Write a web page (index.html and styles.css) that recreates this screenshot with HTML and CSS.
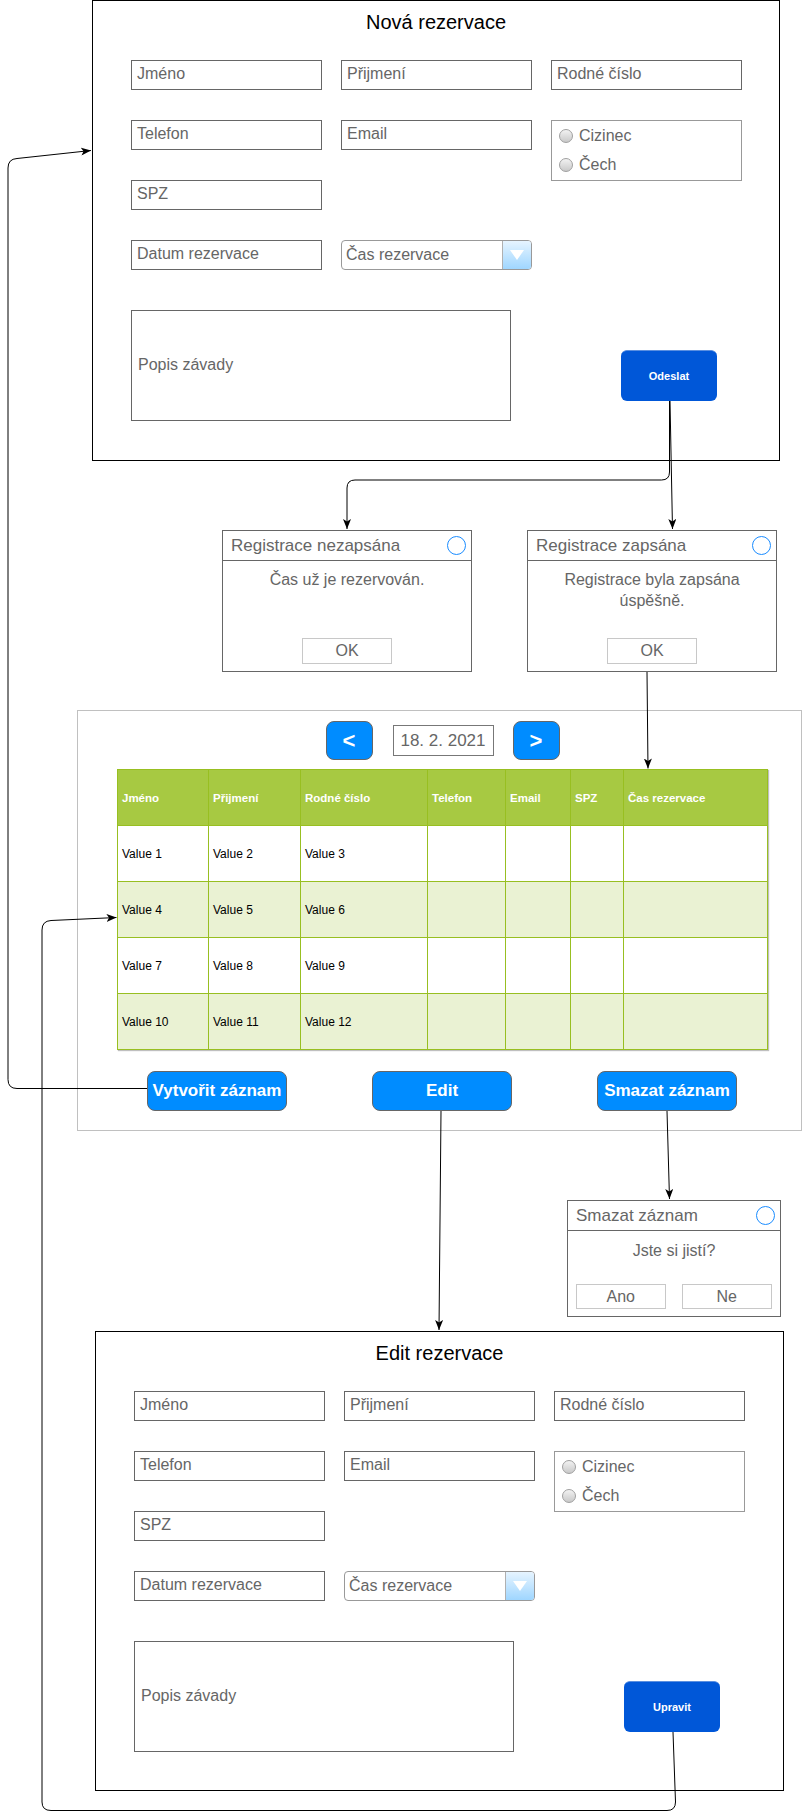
FILE: index.html
```html
<!DOCTYPE html>
<html lang="cs">
<head>
<meta charset="utf-8">
<title>Rezervace</title>
<link rel="stylesheet" href="styles.css">
</head>
<body>
<div class="canvas">

  <section class="frame frame-new">
    <h1 class="frame-title">Nová rezervace</h1>
    <div class="form-grid">
      <div class="field">Jméno</div>
      <div class="field">Přijmení</div>
      <div class="field">Rodné číslo</div>
      <div class="field">Telefon</div>
      <div class="field">Email</div>
      <div class="radios">
        <div class="radio"><span class="radio-dot"></span>Cizinec</div>
        <div class="radio"><span class="radio-dot"></span>Čech</div>
      </div>
      <div class="field">SPZ</div>
      <div class="field field-date">Datum rezervace</div>
      <div class="select"><span class="select-text">Čas rezervace</span><span class="select-btn"><span class="tri"></span></span></div>
    </div>
    <div class="form-bottom">
      <div class="textarea">Popis závady</div>
      <div class="btn-submit">Odeslat</div>
    </div>
  </section>

  <div class="dialog dlg-fail">
    <div class="dlg-head"><span class="dlg-title">Registrace nezapsána</span><span class="dlg-close"></span></div>
    <div class="dlg-body">Čas už je rezervován.</div>
    <div class="dlg-actions"><span class="dlg-btn">OK</span></div>
  </div>

  <div class="dialog dlg-ok">
    <div class="dlg-head"><span class="dlg-title">Registrace zapsána</span><span class="dlg-close"></span></div>
    <div class="dlg-body">Registrace byla zapsána<br>úspěšně.</div>
    <div class="dlg-actions"><span class="dlg-btn">OK</span></div>
  </div>

  <section class="panel">
    <div class="nav">
      <span class="nav-btn">&lt;</span>
      <span class="nav-date">18. 2. 2021</span>
      <span class="nav-btn">&gt;</span>
    </div>
    <table class="grid">
      <colgroup>
        <col class="c1"><col class="c2"><col class="c3"><col class="c4"><col class="c5"><col class="c6"><col class="c7">
      </colgroup>
      <thead>
        <tr><th>Jméno</th><th>Přijmení</th><th>Rodné číslo</th><th>Telefon</th><th>Email</th><th>SPZ</th><th>Čas rezervace</th></tr>
      </thead>
      <tbody>
        <tr><td>Value 1</td><td>Value 2</td><td>Value 3</td><td></td><td></td><td></td><td></td></tr>
        <tr class="alt"><td>Value 4</td><td>Value 5</td><td>Value 6</td><td></td><td></td><td></td><td></td></tr>
        <tr><td>Value 7</td><td>Value 8</td><td>Value 9</td><td></td><td></td><td></td><td></td></tr>
        <tr class="alt"><td>Value 10</td><td>Value 11</td><td>Value 12</td><td></td><td></td><td></td><td></td></tr>
      </tbody>
    </table>
    <div class="actions">
      <span class="act-btn">Vytvořit záznam</span>
      <span class="act-btn">Edit</span>
      <span class="act-btn">Smazat záznam</span>
    </div>
  </section>

  <div class="dialog dlg-del">
    <div class="dlg-head"><span class="dlg-title">Smazat záznam</span><span class="dlg-close"></span></div>
    <div class="dlg-body">Jste si jistí?</div>
    <div class="dlg-actions dlg-actions-two"><span class="dlg-btn">Ano</span><span class="dlg-btn">Ne</span></div>
  </div>

  <section class="frame frame-edit">
    <h1 class="frame-title">Edit rezervace</h1>
    <div class="form-grid">
      <div class="field">Jméno</div>
      <div class="field">Přijmení</div>
      <div class="field">Rodné číslo</div>
      <div class="field">Telefon</div>
      <div class="field">Email</div>
      <div class="radios">
        <div class="radio"><span class="radio-dot"></span>Cizinec</div>
        <div class="radio"><span class="radio-dot"></span>Čech</div>
      </div>
      <div class="field">SPZ</div>
      <div class="field field-date">Datum rezervace</div>
      <div class="select"><span class="select-text">Čas rezervace</span><span class="select-btn"><span class="tri"></span></span></div>
    </div>
    <div class="form-bottom">
      <div class="textarea">Popis závady</div>
      <div class="btn-submit">Upravit</div>
    </div>
  </section>

  <svg class="wires" width="802" height="1819" viewBox="0 0 802 1819">
    <defs>
      <marker id="arr" viewBox="0 0 10 8" refX="10" refY="4" markerWidth="10" markerHeight="8" orient="auto" markerUnits="userSpaceOnUse">
        <path d="M0,0 L10,4 L0,8 L2.5,4 z" fill="#000"/>
      </marker>
    </defs>
    <g fill="none" stroke="#000" stroke-width="1">
      <path d="M669.5 401 V472 Q669.5 480 661.5 480 H355 Q347 480 347 488 V529" marker-end="url(#arr)"/>
      <path d="M670 401 L672.5 529" marker-end="url(#arr)"/>
      <path d="M647 672 L648 768.5" marker-end="url(#arr)"/>
      <path d="M147 1088.5 H17 Q8 1088.5 8 1079.5 V168 Q8 159 17 158.5 L91 150.5" marker-end="url(#arr)"/>
      <path d="M441 1111 L439 1330" marker-end="url(#arr)"/>
      <path d="M667 1111 L669.5 1199" marker-end="url(#arr)"/>
      <path d="M673 1732 L675.5 1802 Q675.5 1810.5 667 1810.5 H51 Q42 1810.5 42 1802 V930 Q42 921 51 920.5 L116.5 917.5" marker-end="url(#arr)"/>
    </g>
  </svg>
</div>
</body>
</html>
```

FILE: styles.css
```css
* { box-sizing: border-box; }
html, body { margin: 0; padding: 0; background: #fff; }
body { font-family: "Liberation Sans", Arial, Helvetica, sans-serif; }

.canvas {
  position: relative;
  width: 802px;
  height: 1819px;
  overflow: hidden;
}

/* ---------- form frames ---------- */
.frame {
  position: absolute;
  border: 1px solid #000;
  background: #fff;
  padding-left: 38px;
}
.frame-new { left: 92px; top: 0; width: 688px; height: 461px; }
.frame-edit { left: 95px; top: 1331px; width: 689px; height: 460px; }

.frame-title {
  margin: 0 0 0 -38px;
  padding-top: 9px;
  font-size: 20px;
  line-height: 24px;
  font-weight: normal;
  color: #000;
  text-align: center;
}

.form-grid {
  margin-top: 26px;
  display: grid;
  grid-template-columns: repeat(3, 191px);
  grid-auto-rows: 30px;
  column-gap: 19px;
  row-gap: 30px;
}

.field {
  border: 1px solid #666;
  display: flex;
  align-items: center;
  padding: 0 0 2px 5px;
  font-size: 16px;
  color: #666;
}
.field-date { grid-column: 1; grid-row: 4; }

.radios {
  grid-column: 3;
  grid-row: 2 / span 2;
  align-self: start;
  height: 61px;
  border: 1px solid #999;
  padding-left: 7px;
  display: flex;
  flex-direction: column;
}
.radio {
  height: 29px;
  display: flex;
  align-items: center;
  gap: 6px;
  font-size: 16px;
  color: #666;
}
.radio-dot {
  width: 14px;
  height: 14px;
  border-radius: 50%;
  border: 1px solid #a0a0a0;
  background: linear-gradient(#f2f2f2, #c9c9c9);
}

.select {
  grid-column: 2;
  grid-row: 4;
  border: 1px solid #999;
  border-radius: 4px;
  display: flex;
  overflow: hidden;
}
.select-text {
  flex: 1;
  display: flex;
  align-items: center;
  padding-left: 4px;
  font-size: 16px;
  color: #666;
}
.select-btn {
  width: 29px;
  border-left: 1px solid #b0b0b0;
  background: linear-gradient(#e6f4ff, #9fd6ff);
  display: flex;
  align-items: center;
  justify-content: center;
}
.tri {
  width: 0;
  height: 0;
  border-left: 7px solid transparent;
  border-right: 7px solid transparent;
  border-top: 10px solid #fff;
}

.form-bottom {
  margin-top: 40px;
  display: flex;
  align-items: flex-start;
}
.textarea {
  width: 380px;
  height: 111px;
  border: 1px solid #666;
  display: flex;
  align-items: center;
  padding: 0 0 2px 6px;
  font-size: 16px;
  color: #666;
}
.btn-submit {
  margin-left: 110px;
  margin-top: 40px;
  width: 96px;
  height: 51px;
  border-radius: 6px;
  background: #0057d8;
  border-top: 1px solid #5a8fe0;
  color: #fff;
  font-size: 11px;
  font-weight: bold;
  display: flex;
  align-items: center;
  justify-content: center;
}

/* ---------- dialogs ---------- */
.dialog {
  position: absolute;
  border: 1px solid #666;
  background: #fff;
  display: flex;
  flex-direction: column;
  color: #666;
}
.dlg-fail { left: 222px; top: 530px; width: 250px; height: 142px; }
.dlg-ok { left: 527px; top: 530px; width: 250px; height: 142px; }
.dlg-del { left: 567px; top: 1200px; width: 214px; height: 117px; }

.dlg-head {
  height: 30px;
  flex: none;
  border-bottom: 1px solid #666;
  display: flex;
  align-items: center;
  justify-content: space-between;
  padding: 0 5px 0 8px;
}
.dlg-title { font-size: 17px; }
.dlg-close {
  width: 19px;
  height: 19px;
  border-radius: 50%;
  border: 1.5px solid #1a8cff;
}
.dlg-body {
  padding-top: 8px;
  font-size: 16px;
  line-height: 21px;
  text-align: center;
}
.dlg-del .dlg-body { padding-top: 9px; }

.dlg-actions {
  margin-top: auto;
  padding: 0 8px 7px;
  display: flex;
  justify-content: center;
  gap: 16px;
}
.dlg-btn {
  width: 90px;
  height: 26px;
  border: 1px solid #c8c8c8;
  display: flex;
  align-items: center;
  justify-content: center;
  font-size: 16px;
  color: #666;
}
.dlg-actions-two .dlg-btn { height: 25px; }
.dlg-actions-two .dlg-btn + .dlg-btn { width: 91px; }

/* ---------- table panel ---------- */
.panel {
  position: absolute;
  left: 77px;
  top: 710px;
  width: 725px;
  height: 421px;
  border: 1px solid #c0c0c0;
  padding: 10px 0 0 39px;
}
.nav {
  width: 650px;
  display: flex;
  justify-content: center;
  align-items: center;
  padding-left: 1px;
}
.nav-btn {
  width: 47px;
  height: 39px;
  border-radius: 8px;
  background: #008cff;
  border: 1px solid #666;
  color: #fff;
  font-size: 22px;
  font-weight: bold;
  display: flex;
  align-items: center;
  justify-content: center;
}
.nav-date {
  margin: 0 19px 0 20px;
  width: 101px;
  height: 31px;
  border: 1px solid #777;
  display: flex;
  align-items: center;
  justify-content: center;
  font-size: 17px;
  color: #666;
}

.grid {
  margin-top: 9px;
  width: 650px;
  border-collapse: collapse;
  table-layout: fixed;
  box-shadow: 1px 1px 1px rgba(0,0,0,0.25);
}
.c1 { width: 91px; }
.c2 { width: 92px; }
.c3 { width: 127px; }
.c4 { width: 78px; }
.c5 { width: 65px; }
.c6 { width: 53px; }
.c7 { width: 144px; }
.grid th, .grid td {
  border: 1px solid #98bf21;
  height: 56px;
  padding: 0 0 0 4px;
  text-align: left;
  vertical-align: middle;
}
.grid th {
  background: #a7c942;
  color: #fff;
  font-size: 11.5px;
  font-weight: bold;
}
.grid td {
  background: #fff;
  font-size: 12px;
  color: #000;
}
.grid tr.alt td { background: #eaf2d3; }

.actions {
  margin-top: 21px;
  width: 650px;
  padding: 0 30px;
  display: flex;
  justify-content: space-between;
}
.act-btn {
  width: 140px;
  height: 40px;
  border-radius: 8px;
  background: #008cff;
  border: 1px solid #666;
  color: #fff;
  font-size: 17px;
  font-weight: bold;
  display: flex;
  align-items: center;
  justify-content: center;
}

/* ---------- connectors ---------- */
.wires {
  position: absolute;
  left: 0;
  top: 0;
  z-index: 5;
  pointer-events: none;
}
```
